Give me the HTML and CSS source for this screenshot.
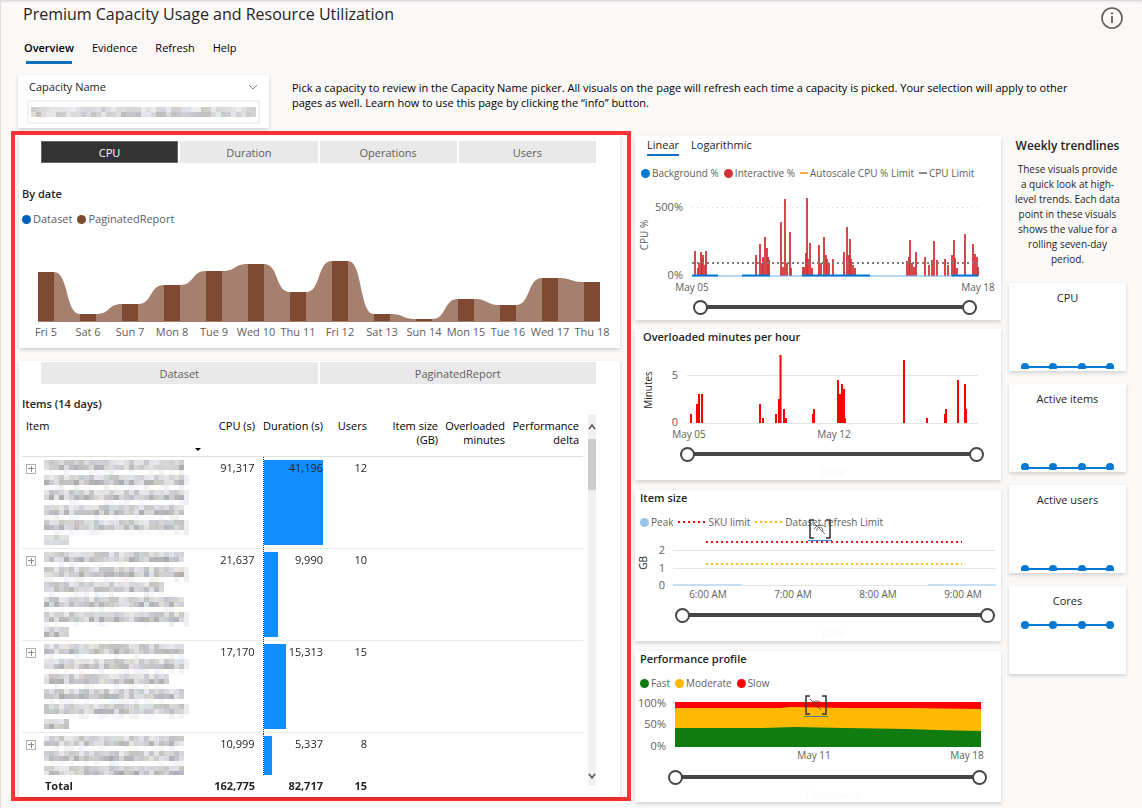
FILE: index.html
```html
<!DOCTYPE html>
<html lang="en">

<head>
  <meta charset="UTF-8">
  <meta name="viewport" content="width=device-width, initial-scale=1.0">
  <title>Premium Capacity Usage and Resource Utilization</title>
  <link rel="stylesheet" href="styles.css">
</head>

<body>
  <header class="top">
    <div>
      <h1>Premium Capacity Usage and Resource Utilization</h1>
      <nav class="nav">
        <a href="#overview" class="active">Overview</a>
        <a href="#evidence">Evidence</a>
        <a href="#refresh">Refresh</a>
        <a href="#help">Help</a>
      </nav>
    </div>
    <button class="info" type="button" aria-label="Info">
      <svg width="24" height="24" viewBox="0 0 24 24">
        <circle cx="12" cy="12" r="10" fill="none" stroke="#605e5c" stroke-width="1.6" />
        <path d="M12 10v7" stroke="#605e5c" stroke-width="1.8" />
        <circle cx="12" cy="7.4" r="1.1" fill="#605e5c" />
      </svg>
    </button>
  </header>

  <div class="filter">
    <div class="card slicer">
      <div class="slicer-head">
        <span id="capacity">Capacity Name</span>
        <svg width="10" height="6" viewBox="0 0 10 6"><path d="M1 1l4 4 4-4" fill="none" stroke="#8a8886" /></svg>
      </div>
      <button class="slicer-box" type="button" aria-labelledby="capacity">
        <canvas class="masked" width="225" height="10" data-lines="45"></canvas>
      </button>
    </div>
    <p>Pick a capacity to review in the Capacity Name picker. All visuals on the page will refresh each time a capacity is picked. Your selection will apply to other pages as well. Learn how to use this page by clicking the “info” button.</p>
  </div>

  <main class="main">
    <section class="frame">
      <div class="card by-date">
        <div class="tabs four">
          <button type="button" class="on">CPU</button>
          <button type="button">Duration</button>
          <button type="button">Operations</button>
          <button type="button">Users</button>
        </div>
        <h2>By date</h2>
        <div class="legend"><i class="dot navy"></i>Dataset <i class="dot brown"></i>PaginatedReport</div>
        <svg class="chart" id="ribbon" viewBox="19 230 601 112"></svg>
      </div>

      <div class="card items">
        <div class="tabs two">
          <button type="button">Dataset</button>
          <button type="button">PaginatedReport</button>
        </div>
        <h2>Items (14 days)</h2>
        <div class="scroller">
          <table>
            <colgroup>
              <col class="c-item"><col class="c-cpu"><col class="c-dur"><col class="c-users"><col class="c-size"><col class="c-over"><col class="c-perf">
            </colgroup>
            <thead>
              <tr>
                <th class="name">Item</th>
                <th class="cpu">CPU (s)<i class="sort"></i></th>
                <th>Duration (s)</th>
                <th>Users</th>
                <th>Item size (GB)</th>
                <th>Overloaded minutes</th>
                <th>Performance delta</th>
              </tr>
            </thead>
            <tbody>
              <tr>
                <td class="name"><div class="item"><button type="button" aria-label="Expand"></button><canvas class="masked" width="145" height="86" data-lines="28,29,29,28,29,5"></canvas></div></td>
                <td class="cpu">91,317</td>
                <td class="dur"><div class="bar" style="width: 94%"></div><span>41,196</span></td>
                <td>12</td><td></td><td></td><td></td>
              </tr>
              <tr>
                <td class="name"><div class="item"><button type="button" aria-label="Expand"></button><canvas class="masked" width="145" height="86" data-lines="28,29,24,28,29,5"></canvas></div></td>
                <td class="cpu">21,637</td>
                <td class="dur"><div class="bar" style="width: 23%"></div><span>9,990</span></td>
                <td>10</td><td></td><td></td><td></td>
              </tr>
              <tr>
                <td class="name"><div class="item"><button type="button" aria-label="Expand"></button><canvas class="masked" width="145" height="86" data-lines="28,29,25,28,29,5"></canvas></div></td>
                <td class="cpu">17,170</td>
                <td class="dur"><div class="bar" style="width: 35%"></div><span>15,313</span></td>
                <td>15</td><td></td><td></td><td></td>
              </tr>
              <tr class="cut">
                <td class="name"><div class="item"><button type="button" aria-label="Expand"></button><canvas class="masked" width="145" height="39" data-lines="28,28,28"></canvas></div></td>
                <td class="cpu">10,999</td>
                <td class="dur"><div class="bar" style="width: 13%"></div><span>5,337</span></td>
                <td>8</td><td></td><td></td><td></td>
              </tr>
            </tbody>
            <tfoot>
              <tr>
                <td class="name">Total</td>
                <td class="cpu">162,775</td>
                <td>82,717</td>
                <td>15</td><td></td><td></td><td></td>
              </tr>
            </tfoot>
          </table>
          <div class="scrollbar">
            <svg width="8" height="24" viewBox="0 0 8 24"><path d="M1 14l3-4 3 4" fill="none" stroke="#505050" stroke-width="1.4" /></svg>
            <div class="thumb"></div>
            <svg class="down" width="8" height="20" viewBox="0 0 8 20"><path d="M1 9l3 4 3-4" fill="none" stroke="#505050" stroke-width="1.4" /></svg>
          </div>
        </div>
      </div>
    </section>

    <section class="charts">
      <div class="card cpu-card">
        <div class="subnav">
          <a href="#linear" class="active">Linear</a>
          <a href="#log">Logarithmic</a>
        </div>
        <div class="legend">
          <i class="dot blue"></i>Background % <i class="dot crimson"></i>Interactive % <i class="dash orange"></i>Autoscale CPU % Limit <i class="dash gray"></i>CPU Limit
        </div>
        <svg class="chart" viewBox="635 184 366 110">
          <path d="M692 207.500H978" stroke="#d8d8d8" stroke-dasharray="1 4" />
          <path d="M695 276V251M698 276V268M699 276V263M701 276V252M702 276V258M703 276V255M705 276V265M706 276V251M756 276V255M760 276V244M762 276V263M763 276V257M765 276V237M767 276V248M768 276V257M769 276V260M781 276V222M783 276V267M785 276V199M787 276V263M790 276V232M791 276V268M803 276V267M804 276V267M806 276V253M807 276V198M808 276V259M810 276V243M812 276V268M819 276V245M821 276V263M824 276V237M826 276V255M827 276V259M829 276V263M833 276V259M844 276V252M847 276V227M849 276V255M850 276V239M851 276V259M853 276V265M855 276V268M907 276V261M909 276V257M910 276V240M912 276V263M914 276V267M916 276V252M925 276V257M929 276V265M932 276V260M934 276V241M937 276V260M945 276V259M948 276V265M952 276V255M954 276V240M955 276V258M957 276V268M965 276V234M973 276V244M975 276V254M977 276V257M978 276V267" stroke="#d13438" stroke-width="1.8" />
          <path d="M692 276H978" stroke="#69b1e8" />
          <path d="M692 275.500H718M742 275.500H770M802 275.500H870M952 275.500H978" stroke="#0078d4" stroke-width="2" />
          <path d="M692 263H978" stroke="#7d7d74" stroke-width="2" stroke-dasharray="2 3" />
          <g class="axis end">
            <text x="683" y="211">500%</text>
            <text x="683" y="279">0%</text>
          </g>
          <g class="tick">
            <text x="692" y="291">May 05</text>
            <text x="978" y="291">May 18</text>
          </g>
          <text class="side" transform="translate(648 235) rotate(-90)">CPU %</text>
        </svg>
        <div class="range r1">
          <input type="range" value="0" aria-label="From">
          <input type="range" value="100" aria-label="To">
        </div>
      </div>

      <div class="card over-card">
        <h2>Overloaded minutes per hour</h2>
        <svg class="chart" viewBox="635 345 366 96">
          <path d="M687 375.500H978M687 423.500H978" stroke="#e4e4e4" />
          <path d="M691 423V414M697 423V404M698 423V414M699 423V394M702 423V394M760 423V404M763 423V418M776 423V414M779 423V399M780.500 423V355M784 423V409M786 423V418M813 423V414M814 423V409M838 423V380M840 423V394M842 423V384M844 423V389M845 423V418M904 423V360M927 423V418M945 423V414M946 423V409M958 423V380M965 423V384M966 423V409" stroke="#f00" stroke-width="2" />
          <g class="axis end">
            <text x="678" y="379">5</text>
            <text x="678" y="426">0</text>
          </g>
          <g class="tick">
            <text x="689" y="438">May 05</text>
            <text x="834" y="438">May 12</text>
          </g>
          <text class="side dark" transform="translate(652 390) rotate(-90)">Minutes</text>
        </svg>
        <div class="range r2">
          <input type="range" value="0" aria-label="From">
          <input type="range" value="100" aria-label="To">
        </div>
        <div class="ghost">Date</div>
      </div>

      <div class="card size-card">
        <h2>Item size</h2>
        <div class="legend"><i class="dot sky"></i>Peak <i class="dots red"></i>SKU limit <i class="dots amber"></i>Dataset refresh Limit</div>
        <svg class="hidden-mark" width="26" height="24" viewBox="0 0 26 24">
          <path d="M7 2H3V20H7M19 2H23V20H19" fill="none" stroke="#333" stroke-width="1.5" />
          <path d="M7 11Q12 4 19 9M10 13a3 3 0 1 1 5 1M7 5L18 16" fill="none" stroke="#555" stroke-width="0.8" />
          <path d="M1 22.500H25" stroke="#2b88d8" />
        </svg>
        <svg class="chart" viewBox="635 532 366 70">
          <path d="M673 550.500H996M673 568.500H996M673 585.500H996" stroke="#e4e4e4" />
          <path d="M673 585H742M928 585H996" stroke="#c7dff4" stroke-width="2" />
          <path d="M706 542H962" stroke="#f0101a" stroke-width="2" stroke-dasharray="2 3" />
          <path d="M706 564H962" stroke="#fcc120" stroke-width="2" stroke-dasharray="2 3" />
          <g class="axis end">
            <text x="665" y="554">2</text>
            <text x="665" y="572">1</text>
            <text x="665" y="589">0</text>
          </g>
          <g class="tick">
            <text x="708" y="598">6:00 AM</text>
            <text x="793" y="598">7:00 AM</text>
            <text x="878" y="598">8:00 AM</text>
            <text x="963" y="598">9:00 AM</text>
          </g>
          <text class="side dark" transform="translate(647 563) rotate(-90)">GB</text>
        </svg>
        <div class="range r3">
          <input type="range" value="0" aria-label="From">
          <input type="range" value="100" aria-label="To">
        </div>
        <div class="ghost">Date</div>
      </div>

      <div class="card perf-card">
        <h2>Performance profile</h2>
        <div class="legend"><i class="dot green"></i>Fast <i class="dot amber"></i>Moderate <i class="dot red"></i>Slow</div>
        <svg class="hidden-mark" width="26" height="24" viewBox="0 0 26 24">
          <path d="M7 2H3V20H7M19 2H23V20H19" fill="none" stroke="#333" stroke-width="1.5" />
          <path d="M7 11Q12 4 19 9M10 13a3 3 0 1 1 5 1M7 5L18 16" fill="none" stroke="#7a2a10" stroke-width="0.8" />
          <path d="M1 22.500H25" stroke="#4f7f6a" />
        </svg>
        <svg class="chart" viewBox="635 693 366 71">
          <path d="M675 702H981V747H675z" fill="#f00" />
          <path d="M675 708L780 708L790 707L850 708L908 708L981 709V747H675z" fill="#ffb900" />
          <path d="M675 728L760 728L795 727L845 728L908 729L935 730L981 731V747H675z" fill="#107c10" />
          <g class="axis end">
            <text x="666" y="707">100%</text>
            <text x="666" y="728">50%</text>
            <text x="666" y="750">0%</text>
          </g>
          <g class="tick">
            <text x="814" y="759">May 11</text>
            <text x="967" y="759">May 18</text>
          </g>
        </svg>
        <div class="range r4">
          <input type="range" value="0" aria-label="From">
          <input type="range" value="100" aria-label="To">
        </div>
        <div class="ghost">Timestamp</div>
      </div>
    </section>

    <aside class="trends">
      <h3>Weekly trendlines</h3>
      <p>These visuals provide a quick look at high-level trends. Each data point in these visuals shows the value for a rolling seven-day period.</p>
      <div class="card">
        <h4>CPU</h4>
        <svg class="chart" viewBox="0 0 117 60">
          <path d="M16 58H101" stroke="#0078d4" stroke-width="2" />
          <g fill="#0078d4"><circle cx="16" cy="58" r="4" /><circle cx="44" cy="58" r="4" /><circle cx="73" cy="58" r="4" /><circle cx="101" cy="58" r="4" /></g>
        </svg>
      </div>
      <div class="card">
        <h4>Active items</h4>
        <svg class="chart" viewBox="0 0 117 60">
          <path d="M16 58H101" stroke="#0078d4" stroke-width="2" />
          <g fill="#0078d4"><circle cx="16" cy="57" r="4" /><circle cx="44" cy="57" r="4" /><circle cx="73" cy="57" r="4" /><circle cx="101" cy="57" r="4" /></g>
        </svg>
      </div>
      <div class="card">
        <h4>Active users</h4>
        <svg class="chart" viewBox="0 0 117 60">
          <path d="M16 58H101" stroke="#0078d4" stroke-width="2" />
          <g fill="#0078d4"><circle cx="16" cy="58" r="4" /><circle cx="44" cy="58" r="4" /><circle cx="73" cy="58" r="4" /><circle cx="101" cy="58" r="4" /></g>
        </svg>
      </div>
      <div class="card">
        <h4>Cores</h4>
        <svg class="chart" viewBox="0 0 117 60">
          <path d="M16 13H101" stroke="#0078d4" stroke-width="2" />
          <g fill="#0078d4"><circle cx="16" cy="13" r="4" /><circle cx="44" cy="13" r="4" /><circle cx="73" cy="13" r="4" /><circle cx="101" cy="13" r="4" /></g>
        </svg>
      </div>
    </aside>
  </main>
  <script src="app.js"></script>
</body>

</html>
```
FILE: styles.css
```css
* {
  box-sizing: border-box;
}

body {
  margin: 0;
  padding: 0 16px 6px 11px;
  font-family: "Open Sans", "Noto Sans", sans-serif;
  font-size: 11px;
  line-height: 15px;
  color: #252423;
  background-color: #faf9f8;
  box-shadow: inset 1px 0 0 #e1dfdd, inset 0 3px 3px -2px #d0cecc;
}

h1,
h2,
h3,
h4,
p {
  margin: 0;
  font-weight: 500;
}

button {
  padding: 0;
  border: 0;
  font: inherit;
  color: inherit;
  background: none;
}

a {
  color: inherit;
  text-decoration: none;
}

.card {
  position: relative;
  background-color: #fff;
  box-shadow: 0 2px 4px rgba(0, 0, 0, 0.16);
}

.chart {
  display: block;
  width: 100%;
  height: auto;
}

/* header */
.top {
  display: flex;
  justify-content: space-between;
  align-items: flex-start;
}

h1 {
  padding-left: 12px;
  font-size: 16px;
  line-height: 28px;
}

.nav {
  display: flex;
  gap: 18px;
  margin-top: 8px;
  padding-left: 13px;
  line-height: 24px;
  color: #000;
}

.nav a {
  padding-bottom: 1px;
  border-bottom: 3px solid transparent;
}

.nav .active {
  font-weight: 600;
  border-image: linear-gradient(90deg, transparent 5px, #106ebe 5px, #106ebe calc(100% - 5px), transparent calc(100% - 5px)) 3;
}

.info {
  width: 24px;
  height: 24px;
  margin: 6px 2px 0 0;
}

.filter {
  display: flex;
  align-items: flex-start;
  gap: 23px;
  margin: 11px 0 3px 7px;
}

.filter p {
  flex: 1;
  padding: 5px 0 0;
  margin-right: 36px;
  font-weight: 400;
  color: #000;
}

.slicer {
  width: 251px;
  height: 53px;
  padding: 4px 9px;
}

.slicer-head {
  display: flex;
  justify-content: space-between;
  align-items: center;
  padding: 0 2px;
  line-height: 16px;
}

.slicer-box {
  display: flex;
  align-items: center;
  width: 100%;
  height: 24px;
  margin-top: 5px;
  padding: 0 2px;
  overflow: hidden;
  border: 2px solid #f3f2f1;
}

.slicer-box canvas {
  opacity: 0.8;
}

/* columns */
.main {
  display: grid;
  grid-template-columns: minmax(0, 620fr) minmax(0, 370fr) minmax(0, 125fr);
  align-items: start;
}

.frame {
  padding: 1px 7px 0 4px;
  border: 4px solid #fd3232;
}

.charts {
  margin-left: 4px;
  padding-top: 5px;
}

.trends {
  margin-left: 8px;
  padding-top: 6px;
  text-align: center;
}

h2 {
  font-size: 11px;
  line-height: 18px;
  font-weight: 600;
}

.charts h2 {
  line-height: 16px;
}

.legend {
  display: flex;
  align-items: center;
  line-height: 18px;
  color: #605e5c;
  white-space: nowrap;
}

.charts .legend {
  font-size: 10px;
}

.legend i {
  flex: none;
  margin-left: 5px;
}

.legend i:first-child {
  margin-left: 0;
}

.dot {
  width: 9px;
  height: 9px;
  margin-right: 2px;
  border-radius: 50%;
  background-color: currentColor;
}

.dash {
  width: 8px;
  margin-right: 2px;
  border-top: 2px solid;
}

.dots {
  width: 28px;
  height: 2px;
  margin-right: 2px;
  background: repeating-linear-gradient(90deg, currentColor 0 2px, transparent 2px 5px);
}

.navy { color: #005fb8; }
.brown { color: #804a32; }
.blue { color: #0078d4; }
.crimson { color: #d13438; }
.orange { color: #ffaa44; }
.gray { color: #8a8886; }
.sky { color: #99c3ec; }
.green { color: #107c10; }
.amber { color: #ffb900; }
.red { color: #f00; }

/* by date */
.by-date {
  padding: 5px 0 6px;
}

.tabs {
  display: grid;
  gap: 2px;
  margin: 0 24px 0 22px;
}

.four {
  grid-template-columns: repeat(4, 1fr);
}

.two {
  grid-template-columns: repeat(2, 1fr);
}

.tabs button {
  height: 22px;
  color: #605e5c;
  background-color: #e9e9e9;
}

.tabs .on {
  color: #fff;
  background-color: #333;
  border: 1px solid #666;
}

.by-date h2 {
  margin: 22px 0 7px 3px;
}

.by-date .legend {
  margin: 0 0 2px 3px;
}

text {
  fill: #605e5c;
}

.axis {
  font-size: 11px;
}

.tick,
.side {
  font-size: 10px;
}

.middle,
.tick,
.side {
  text-anchor: middle;
}

.end {
  text-anchor: end;
}

.dark {
  fill: #252423;
}

/* items */
.items {
  margin-top: 13px;
  padding: 1px 0 2px;
}

.items h2 {
  margin: 11px 0 2px 3px;
}

.scroller {
  display: flex;
  gap: 5px;
  margin: 0 24px 0 3px;
}

table {
  flex: 1;
  width: 100%;
  table-layout: fixed;
  border-collapse: collapse;
}

.c-item { width: 167px; }
.c-cpu { width: 74px; }
.c-dur { width: 64px; }
.c-users { width: 44px; }
.c-size { width: 71px; }
.c-over { width: 67px; }
.c-perf { width: 74px; }

th,
td {
  padding: 3px 4px 0 0;
  text-align: right;
  vertical-align: top;
}

th {
  height: 41px;
  padding-top: 4px;
  line-height: 14px;
  font-weight: 500;
  color: #000;
  border-bottom: 1px solid #e1dfdd;
}

.name {
  padding-left: 4px;
  text-align: left;
}

.cpu {
  padding-right: 8px;
}

.sort {
  display: block;
  width: 0;
  margin: 15px 0 0 6px;
  border: 3px solid transparent;
  border-top-color: #000;
  border-bottom: 0;
}

tbody td {
  height: 92px;
  border-bottom: 1px solid #edebe9;
}

tbody .cut td {
  height: 43px;
  border-bottom: 0;
}

.item {
  display: flex;
  align-items: flex-start;
  gap: 8px;
}

.item button {
  flex: none;
  width: 10px;
  height: 10px;
  margin-top: 4px;
  border: 1px solid #b3b0ad;
  background: linear-gradient(#8a8886, #8a8886) center / 6px 1px no-repeat, linear-gradient(#8a8886, #8a8886) center / 1px 6px no-repeat;
}

.dur {
  position: relative;
  border-left: 1px dotted #333;
}

.bar {
  position: absolute;
  top: 3px;
  bottom: 3px;
  left: 0;
  background-color: #118dff;
}

.cut .bar {
  bottom: 0;
}

.dur span {
  position: relative;
}

tfoot td {
  height: 20px;
  font-weight: 700;
}

tfoot .name {
  padding-left: 23px;
}

.scrollbar {
  display: flex;
  flex-direction: column;
  width: 8px;
  margin-bottom: 10px;
  background-color: #f0f0f0;
}

.thumb {
  height: 51px;
  background-color: #cdcdcd;
}

.down {
  margin-top: auto;
}

/* charts */
.over-card {
  margin-top: 9px;
}

.size-card,
.perf-card {
  margin-top: 10px;
}

.subnav {
  display: flex;
  gap: 12px;
  padding-left: 12px;
  line-height: 18px;
}

.subnav a {
  border-bottom: 2px solid transparent;
}

.subnav .active {
  border-color: #106ebe;
}

.cpu-card .legend {
  margin: 8px 0 2px 6px;
}

.over-card h2 {
  padding-left: 8px;
}

.size-card h2,
.perf-card h2,
.size-card .legend,
.perf-card .legend {
  padding-left: 5px;
}

.size-card .legend,
.perf-card .legend {
  margin: 7px 0 1px;
}

.hidden-mark {
  position: absolute;
  top: 28px;
  left: 47%;
}

.perf-card .hidden-mark {
  top: 43px;
  left: 46%;
}

.range {
  position: relative;
  height: 26px;
}

.range::before {
  content: "";
  position: absolute;
  top: 11px;
  right: 8px;
  left: 8px;
  height: 4px;
  background-color: #484644;
}

.range input {
  position: absolute;
  top: 5px;
  left: 0;
  width: 100%;
  height: 16px;
  margin: 0;
  appearance: none;
  background: none;
  pointer-events: none;
}

.range input::-webkit-slider-thumb {
  width: 15px;
  height: 15px;
  appearance: none;
  border: 2px solid #484644;
  border-radius: 50%;
  background-color: #fff;
  pointer-events: auto;
}

.r1 { margin: 0 24px 0 58px; }
.r2 { margin: 0 17px 0 45px; }
.r3 { margin: 0 6px 0 40px; }
.r4 { margin: 0 14px 0 33px; }

.ghost {
  height: 13px;
  padding-left: 31px;
  line-height: 9px;
  text-align: center;
  color: #f8f8f8;
}

.perf-card .ghost {
  height: 12px;
}

/* trends */
h3 {
  font-size: 12px;
  line-height: 18px;
  font-weight: 600;
  white-space: nowrap;
}

.trends p {
  margin: 7px 0 16px;
  padding: 0 5px;
  font-size: 10px;
  font-weight: 400;
}

.trends .card {
  height: 88px;
  padding-top: 6px;
}

.trends .card + .card {
  margin-top: 13px;
}

h4 {
  height: 20px;
  font-size: 11px;
  line-height: 18px;
  font-weight: 400;
}
```
FILE: app.js
```js
var NS = 'http://www.w3.org/2000/svg'
var days = ['Fri 5', 'Sat 6', 'Sun 7', 'Mon 8', 'Tue 9', 'Wed 10', 'Thu 11', 'Fri 12', 'Sat 13', 'Sun 14', 'Mon 15', 'Tue 16', 'Wed 17', 'Thu 18']
var tops = [272, 314, 304, 285, 271, 264, 292, 261, 314, 319, 299, 305, 278, 282]
var base = 322

function add(parent, name, attrs) {
  var el = document.createElementNS(NS, name)
  for (var key in attrs) {
    el.setAttribute(key, attrs[key])
  }
  parent.appendChild(el)
  return el
}

// ribbon chart: solid bars joined by lighter bands
var ribbon = document.getElementById('ribbon')
var area = 'M38 ' + base + 'V' + tops[0]
for (var i = 0; i < tops.length; i++) {
  var x = 38 + i * 42
  area += 'L' + (x + 16) + ' ' + tops[i]
  if (i < tops.length - 1) {
    area += 'C' + (x + 31) + ' ' + tops[i] + ' ' + (x + 27) + ' ' + tops[i + 1] + ' ' + (x + 42) + ' ' + tops[i + 1]
  }
}
add(ribbon, 'path', { d: area + 'V' + base + 'z', fill: '#a6806e' })
var labels = add(ribbon, 'g', { class: 'axis middle' })
for (var j = 0; j < tops.length; j++) {
  add(ribbon, 'rect', { x: 38 + j * 42, y: tops[j], width: 16, height: base - 1 - tops[j], fill: '#804a32' })
  add(labels, 'text', { x: 46 + j * 42, y: 336 }).textContent = days[j]
}

// masked names: 5px tiles, two rows per line and a faint one between
var seed = 7
function rand() {
  seed = (seed * 16807) % 2147483647
  return seed / 2147483647
}

var masked = document.getElementsByClassName('masked')
for (var m = 0; m < masked.length; m++) {
  var ctx = masked[m].getContext('2d')
  masked[m].dataset.lines.split(',').forEach(function (len, line) {
    for (var row = 0; row < 3; row++) {
      for (var col = 0; col < +len; col++) {
        var tone = [214, 200, 247][row] + Math.round((rand() - 0.5) * [40, 56, 12][row])
        if (row === 2 && rand() < 0.5) continue
        if (col === 28 && len === '29') tone = 238
        var r = tone + Math.round(rand() * 8 - 4)
        var b = tone + Math.round(rand() * 14 - 5)
        ctx.fillStyle = 'rgb(' + r + ',' + tone + ',' + b + ')'
        ctx.fillRect(col * 5, line * 15 + row * 5, 5, 5)
      }
    }
  })
}
```
